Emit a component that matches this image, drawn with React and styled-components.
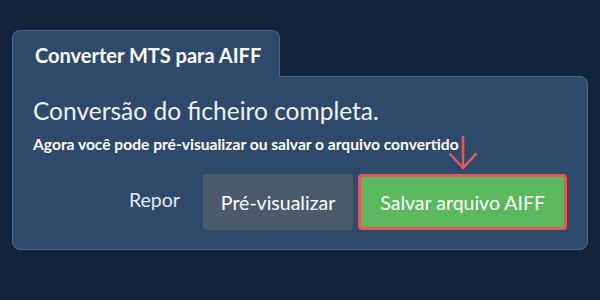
import styled, { createGlobalStyle } from "styled-components";

const Global = createGlobalStyle`
  body {
    margin: 0;
    background: #13233a;
    font-family: Lato, "Noto Sans", sans-serif;
  }
`;

const Page = styled.div`
  width: 600px;
  height: 300px;
  padding: 30px 12px 0;
  box-sizing: border-box;
`;

const Tab = styled.div`
  width: 268px;
  height: 47px;
  box-sizing: border-box;
  background: #2e4a6b;
  border: 1px solid #4b6788;
  border-bottom: none;
  border-radius: 8px 8px 0 0;
  color: #fff;
  font-size: 20px;
  font-weight: 700;
  padding: 12px 0 0 22px;
  position: relative;
  z-index: 1;
`;

const Card = styled.div`
  margin-top: -1px;
  height: 174px;
  box-sizing: border-box;
  background: #2e4a6b;
  border: 1px solid #4b6788;
  border-radius: 0 8px 8px 8px;
  padding: 19px 20px 0 20px;
  color: #fff;
`;

const Heading = styled.h2`
  margin: 0;
  font-size: 24.5px;
  font-weight: 400;
  line-height: 29px;
  color: #f0f2f5;
`;

const Sub = styled.p`
  margin: 9px 0 0;
  font-size: 15.6px;
  font-weight: 700;
  line-height: 20px;
`;

const Actions = styled.div`
  display: flex;
  justify-content: flex-end;
  align-items: center;
  gap: 5px;
  margin-top: 20px;
`;

const LinkButton = styled.button`
  background: none;
  border: none;
  color: #e6eaf0;
  font-family: inherit;
  font-size: 19.5px;
  padding: 0 18px 0 0;
  height: 56px;
  margin-top: -6px;
`;

const Button = styled.button`
  height: 56px;
  box-sizing: border-box;
  border-radius: 4px;
  font-family: inherit;
  font-size: 19.5px;
  color: #fff;
  padding: 0 ${(p) => (p.$primary ? "19px" : "18px")};
  background: ${(p) => (p.$primary ? "#5cb85c" : "#4b5b6c")};
  border: ${(p) => (p.$primary ? "3px solid #e05a5a" : "none")};
  position: relative;
`;

const Arrow = styled.svg`
  position: absolute;
  left: 50%;
  top: -41px;
  transform: translateX(-50%);
  overflow: visible;
`;

export default function App() {
  return (
    <>
      <Global />
      <Page>
        <Tab>Converter MTS para AIFF</Tab>
        <Card>
          <Heading>Conversão do ficheiro completa.</Heading>
          <Sub>Agora você pode pré-visualizar ou salvar o arquivo convertido</Sub>
          <Actions>
            <LinkButton>Repor</LinkButton>
            <Button>Pré-visualizar</Button>
            <Button $primary>
              Salvar arquivo AIFF
              <Arrow width="30" height="34" viewBox="0 0 30 34">
                <path
                  d="M15 1 V32 M2 18 L15 32 L28 18"
                  fill="none"
                  stroke="#e05a5a"
                  strokeWidth="2.5"
                  strokeLinecap="round"
                />
              </Arrow>
            </Button>
          </Actions>
        </Card>
      </Page>
    </>
  );
}
